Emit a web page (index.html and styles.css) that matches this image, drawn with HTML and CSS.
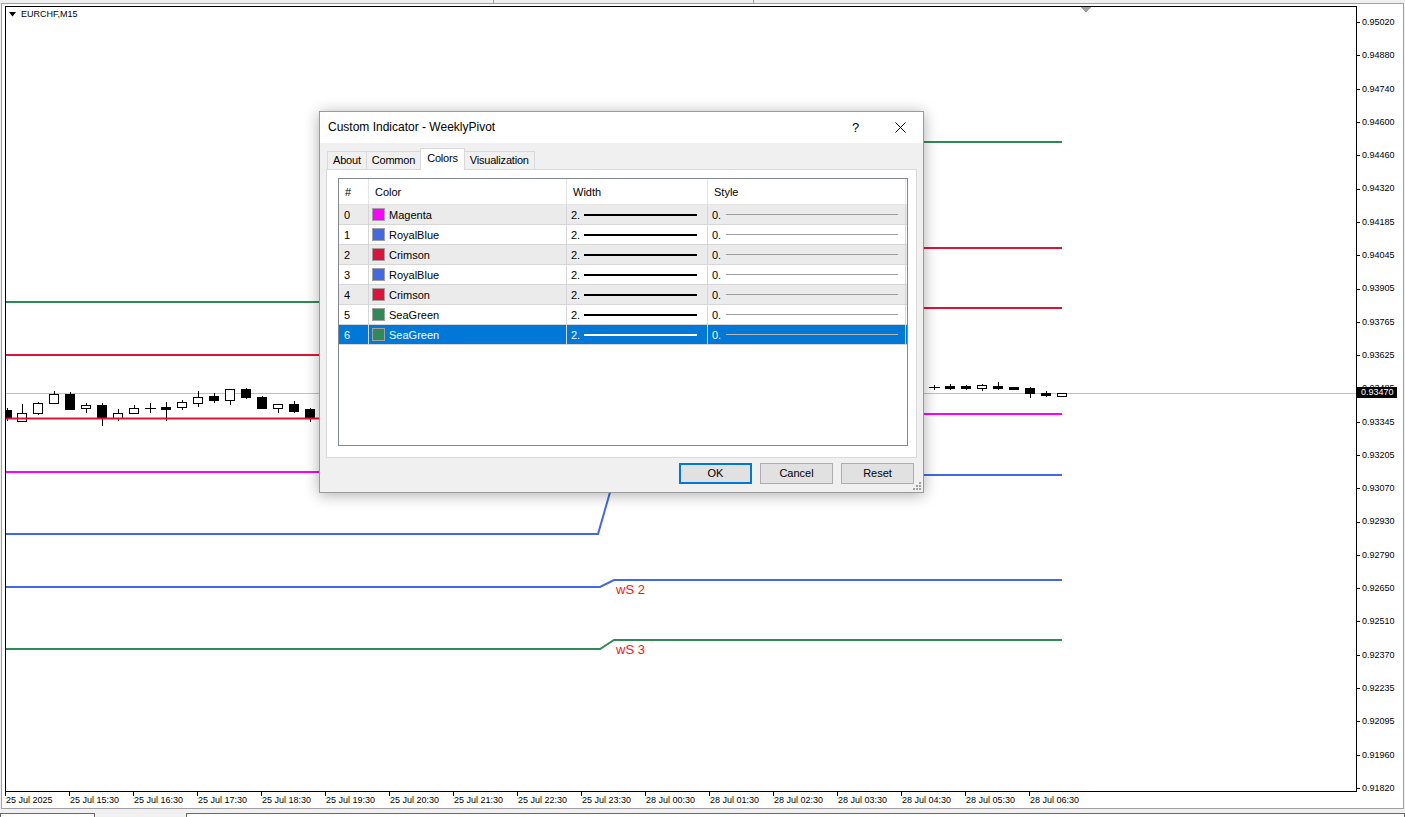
FILE: index.html
```html
<!DOCTYPE html>
<html lang="en">
<head>
    <meta charset="UTF-8">
    <title>EURCHF,M15 - Custom Indicator</title>
    <link rel="stylesheet" href="styles.css">
</head>
<body>
<div class="terminal">

    <div class="top-strip">
        <span class="top-cell first"></span>
        <span class="top-cell second"></span>
    </div>

    <div class="chart-window">
        <div class="chart-grid">

            <!-- plot area -->
            <div class="plot">
                <div class="symbol">
                    <svg width="7" height="5" viewBox="0 0 7 5"><path d="M0 0H7L3.5 4.5Z" fill="#000"/></svg>
                    <span>EURCHF,M15</span>
                </div>
                <svg width="1350" height="784" viewBox="6 7 1350 784" shape-rendering="crispEdges">
                    <!-- chart shift marker -->
                    <path d="M1080 7H1091L1085.5 12.5Z" fill="#a0a0a0"/>
                    <!-- bid line -->
                    <path d="M6 393.5H1356" stroke="#c0c0c0" stroke-width="1"/>

                    <!-- candles left -->
                    <g stroke="#000" stroke-width="1">
                        <path d="M7.5 408V421"/><rect x="2.5" y="410.5" width="9" height="8" fill="#000"/>
                        <path d="M22.5 404V421"/><rect x="17.5" y="413.5" width="9" height="8" fill="#fff"/>
                        <path d="M38.5 402V415"/><rect x="33.5" y="403.5" width="9" height="10" fill="#fff"/>
                        <path d="M54.5 391V403"/><rect x="49.5" y="394.5" width="9" height="9" fill="#fff"/>
                        <path d="M70.5 392V409"/><rect x="65.5" y="394.5" width="9" height="15" fill="#000"/>
                        <path d="M86.5 403V413"/><rect x="81.5" y="405.5" width="9" height="3" fill="#fff"/>
                        <path d="M102.5 403V426"/><rect x="97.5" y="405.5" width="9" height="13" fill="#000"/>
                        <path d="M118.5 409V421"/><rect x="113.5" y="413.5" width="9" height="5" fill="#fff"/>
                        <path d="M134.5 405V413"/><rect x="129.5" y="408.5" width="9" height="5" fill="#fff"/>
                        <path d="M150.5 403V413M145 408.5H156"/>
                        <path d="M166.5 402V421"/><rect x="161.5" y="407.5" width="9" height="2" fill="#000"/>
                        <path d="M182.5 400V410"/><rect x="177.5" y="402.5" width="9" height="5" fill="#fff"/>
                        <path d="M198.5 391V407"/><rect x="193.5" y="397.5" width="9" height="6" fill="#fff"/>
                        <path d="M214.5 393V403"/><rect x="209.5" y="396.5" width="9" height="4" fill="#000"/>
                        <path d="M230.5 389V405"/><rect x="225.5" y="389.5" width="9" height="11" fill="#fff"/>
                        <path d="M246.5 388V399"/><rect x="241.5" y="389.5" width="9" height="8" fill="#000"/>
                        <path d="M262.5 396V408"/><rect x="257.5" y="397.5" width="9" height="11" fill="#000"/>
                        <path d="M278.5 404V413"/><rect x="273.5" y="404.5" width="9" height="4" fill="#fff"/>
                        <path d="M294.5 401V413"/><rect x="289.5" y="404.5" width="9" height="7" fill="#000"/>
                        <path d="M310.5 408V422"/><rect x="305.5" y="409.5" width="9" height="9" fill="#000"/>
                    </g>

                    <!-- candles right -->
                    <g stroke="#000" stroke-width="1">
                        <path d="M934.5 385V390M929 387.5H940"/>
                        <path d="M950.5 384V390"/><rect x="945.5" y="386.5" width="9" height="2" fill="#000"/>
                        <path d="M966.5 385V390"/><rect x="961.5" y="386.5" width="9" height="2" fill="#000"/>
                        <path d="M982.5 384V391"/><rect x="977.5" y="385.5" width="9" height="3" fill="#fff"/>
                        <path d="M998.5 382V390"/><rect x="993.5" y="386.5" width="9" height="2" fill="#000"/>
                        <rect x="1009.5" y="387.5" width="9" height="2" fill="#000"/>
                        <path d="M1030.5 387V398"/><rect x="1025.5" y="388.5" width="9" height="5" fill="#000"/>
                        <path d="M1046.5 391V397"/><rect x="1041.5" y="393.5" width="9" height="2" fill="#000"/>
                        <rect x="1057.5" y="393.5" width="9" height="3" fill="#fff"/>
                    </g>

                    <!-- weekly pivot levels -->
                    <g fill="none" stroke-width="2" shape-rendering="auto">
                        <polyline points="6,302 600,302 614,142 1062,142" stroke="#2e8b57"/>
                        <polyline points="6,355 600,355 614,248 1062,248" stroke="#dc143c"/>
                        <polyline points="6,418.5 600,418.5 614,308 1062,308" stroke="#dc143c"/>
                        <polyline points="6,472 600,472 614,414 1062,414" stroke="#ff00ff"/>
                        <polyline points="6,534 598,534 615,475 1062,475" stroke="#4169e1"/>
                        <polyline points="6,587 600,587 614,580 1062,580" stroke="#4169e1"/>
                        <polyline points="6,649 600,649 614,640 1062,640" stroke="#2e8b57"/>
                    </g>
                    <text x="616" y="594" class="level-label">wS 2</text>
                    <text x="616" y="654" class="level-label">wS 3</text>
                </svg>
            </div>

            <!-- price scale -->
            <div class="price-axis">
                <span class="tick-label">0.95020</span>
                <span class="tick-label">0.94880</span>
                <span class="tick-label">0.94740</span>
                <span class="tick-label">0.94600</span>
                <span class="tick-label">0.94460</span>
                <span class="tick-label">0.94320</span>
                <span class="tick-label">0.94185</span>
                <span class="tick-label">0.94045</span>
                <span class="tick-label">0.93905</span>
                <span class="tick-label">0.93765</span>
                <span class="tick-label">0.93625</span>
                <span class="tick-label">0.93485</span>
                <span class="tick-label">0.93345</span>
                <span class="tick-label">0.93205</span>
                <span class="tick-label">0.93070</span>
                <span class="tick-label">0.92930</span>
                <span class="tick-label">0.92790</span>
                <span class="tick-label">0.92650</span>
                <span class="tick-label">0.92510</span>
                <span class="tick-label">0.92370</span>
                <span class="tick-label">0.92235</span>
                <span class="tick-label">0.92095</span>
                <span class="tick-label">0.91960</span>
                <span class="tick-label">0.91820</span>
                <span class="bid">0.93470</span>
            </div>

            <!-- time scale -->
            <div class="time-axis">
                <span>25 Jul 2025</span>
                <span>25 Jul 15:30</span>
                <span>25 Jul 16:30</span>
                <span>25 Jul 17:30</span>
                <span>25 Jul 18:30</span>
                <span>25 Jul 19:30</span>
                <span>25 Jul 20:30</span>
                <span>25 Jul 21:30</span>
                <span>25 Jul 22:30</span>
                <span>25 Jul 23:30</span>
                <span>28 Jul 00:30</span>
                <span>28 Jul 01:30</span>
                <span>28 Jul 02:30</span>
                <span>28 Jul 03:30</span>
                <span>28 Jul 04:30</span>
                <span>28 Jul 05:30</span>
                <span>28 Jul 06:30</span>
            </div>
        </div>
    </div>

    <div class="tab-strip">
        <span class="strip-tab first"></span>
        <span class="strip-tab rest"></span>
    </div>

    <!-- indicator properties dialog -->
    <div class="dialog">
        <div class="dlg-title">
            <span class="caption">Custom Indicator - WeeklyPivot</span>
            <span class="dlg-btn help">?</span>
            <span class="dlg-btn close">
                <svg width="11" height="11" viewBox="0 0 11 11"><path d="M0.5 0.5L10.5 10.5M10.5 0.5L0.5 10.5" stroke="#000" stroke-width="1"/></svg>
            </span>
        </div>

        <div class="dlg-body">
            <div class="tabs">
                <span class="tab">About</span>
                <span class="tab">Common</span>
                <span class="tab active">Colors</span>
                <span class="tab">Visualization</span>
            </div>

            <div class="panel">
                <div class="listview">
                    <div class="lv-row lv-head"><span>#</span><span>Color</span><span>Width</span><span>Style</span></div>
                    <div class="lv-row alt"><span>0</span><span><i class="swatch magenta"></i>Magenta</span><span>2.<i class="wline"></i></span><span>0.<i class="sline"></i></span></div>
                    <div class="lv-row"><span>1</span><span><i class="swatch royalblue"></i>RoyalBlue</span><span>2.<i class="wline"></i></span><span>0.<i class="sline"></i></span></div>
                    <div class="lv-row alt"><span>2</span><span><i class="swatch crimson"></i>Crimson</span><span>2.<i class="wline"></i></span><span>0.<i class="sline"></i></span></div>
                    <div class="lv-row"><span>3</span><span><i class="swatch royalblue"></i>RoyalBlue</span><span>2.<i class="wline"></i></span><span>0.<i class="sline"></i></span></div>
                    <div class="lv-row alt"><span>4</span><span><i class="swatch crimson"></i>Crimson</span><span>2.<i class="wline"></i></span><span>0.<i class="sline"></i></span></div>
                    <div class="lv-row"><span>5</span><span><i class="swatch seagreen"></i>SeaGreen</span><span>2.<i class="wline"></i></span><span>0.<i class="sline"></i></span></div>
                    <div class="lv-row selected"><span>6</span><span><i class="swatch seagreen"></i>SeaGreen</span><span>2.<i class="wline"></i></span><span>0.<i class="sline"></i></span></div>
                </div>
            </div>

            <div class="dlg-buttons">
                <button class="default">OK</button>
                <button>Cancel</button>
                <button>Reset</button>
            </div>
        </div>

        <svg class="grip" width="8" height="8" viewBox="0 0 8 8" fill="#a0a0a0">
            <rect x="6" y="0" width="2" height="2"/>
            <rect x="3" y="3" width="2" height="2"/><rect x="6" y="3" width="2" height="2"/>
            <rect x="0" y="6" width="2" height="2"/><rect x="3" y="6" width="2" height="2"/><rect x="6" y="6" width="2" height="2"/>
        </svg>
    </div>

</div>
</body>
</html>
```

FILE: styles.css
```css
* {
    box-sizing: border-box;
}

body {
    margin: 0;
    background-color: #f0f0f0;
    font-family: "Liberation Sans", Arial, sans-serif;
    color: #000;
    overflow: hidden;
}

.terminal {
    width: 1405px;
    height: 817px;
    display: flex;
    flex-direction: column;
    position: relative;
}

/* strip of the toolbar above the chart */
.top-strip {
    height: 3px;
    display: flex;
}

.top-cell {
    border-right: 1px solid #a0a0a0;
}

.top-cell.first {
    width: 494px;
}

.top-cell.second {
    width: 260px;
}

/* chart window */
.chart-window {
    height: 806px;
    margin: 0 1px;
    border: 1px solid #a0a0a0;
    background-color: #fff;
    padding: 2px 0 0 3px;
}

.chart-grid {
    display: grid;
    grid-template-columns: 1352px 1fr;
    grid-template-rows: 786px 16px;
    height: 100%;
}

.plot {
    border: 1px solid #000;
    position: relative;
}

.plot > svg {
    display: block;
}

.symbol {
    position: absolute;
    left: 3px;
    top: 2px;
    display: flex;
    align-items: center;
    gap: 5px;
    font-size: 9px;
    line-height: 11px;
}

.level-label {
    font-family: "Liberation Sans", Arial, sans-serif;
    font-size: 13px;
    fill: #ff1010;
}

/* price scale */
.price-axis {
    position: relative;
    display: flex;
    flex-direction: column;
    font-size: 9px;
}

.tick-label {
    flex: none;
    height: 33.3px;
    line-height: 33.3px;
    padding-left: 5px;
    background: linear-gradient(#000, #000) no-repeat 0 50% / 3px 1px;
}

.bid {
    position: absolute;
    left: 0;
    top: 381px;
    width: 40px;
    height: 11px;
    line-height: 11px;
    padding-left: 4px;
    background-color: #000;
    color: #fff;
}

/* time scale */
.time-axis {
    grid-column: 1 / 3;
    display: flex;
    font-size: 9px;
    line-height: 16px;
}

.time-axis span {
    flex: none;
    width: 64px;
    padding-left: 1px;
    white-space: nowrap;
    background: linear-gradient(#000, #000) no-repeat 0 0 / 1px 4px;
}

/* sheet tabs at the bottom */
.tab-strip {
    flex: 1;
    display: flex;
    align-items: flex-end;
}

.strip-tab {
    height: 4px;
    border: 1px solid #696969;
    border-bottom: none;
    background-color: #fff;
}

.strip-tab.first {
    width: 95px;
}

.strip-tab.rest {
    flex: 1;
    margin-left: 91px;
}

/* dialog */
.dialog {
    position: absolute;
    left: 319px;
    top: 111px;
    width: 605px;
    height: 382px;
    border: 1px solid #9a9a9a;
    background-color: #f0f0f0;
    box-shadow: 0 2px 14px rgba(0, 0, 0, 0.32);
    font-size: 11px;
}

.dlg-title {
    height: 31px;
    background-color: #fff;
    display: flex;
    align-items: center;
    padding-left: 8px;
}

.caption {
    flex: 1;
    font-size: 12px;
    margin-top: -1px;
}

.dlg-btn {
    width: 45px;
    height: 31px;
    display: flex;
    align-items: center;
    justify-content: center;
}

.dlg-btn.help {
    font-size: 13px;
}

.dlg-body {
    padding: 8px 6px 0 6px;
}

.tabs {
    display: flex;
    align-items: flex-end;
    height: 18px;
    padding-left: 1px;
    position: relative;
    z-index: 1;
}

.tab {
    height: 18px;
    line-height: 17px;
    padding: 0 5px;
    border: 1px solid #d9d9d9;
    border-bottom: none;
    margin-left: -1px;
    letter-spacing: -0.2px;
}

.tab:first-child {
    margin-left: 0;
}

.tab.active {
    height: 22px;
    line-height: 18px;
    margin-bottom: -1px;
    padding: 0 6px;
    background-color: #fff;
}

.panel {
    height: 289px;
    border: 1px solid #d9d9d9;
    background-color: #fff;
    padding: 8px 0 0 11px;
}

.listview {
    width: 570px;
    height: 268px;
    border: 1px solid #828790;
    background-color: #fff;
}

.lv-row {
    display: grid;
    grid-template-columns: 30px 198px 141px 198px;
    height: 20px;
    border-bottom: 1px solid #d6d6d6;
}

.lv-row span {
    display: flex;
    align-items: center;
    padding-left: 4px;
    border-right: 1px solid #d6d6d6;
    white-space: nowrap;
    overflow: hidden;
}

.lv-row span:first-child {
    padding-left: 5px;
}

.lv-row span:nth-child(2) {
    padding-left: 3px;
}

.lv-row.lv-head {
    height: 26px;
    border-bottom-color: #e5e5e5;
}

.lv-row.lv-head span {
    padding-left: 6px;
    border-right-color: #e5e5e5;
}

.lv-row.alt {
    background-color: #ebebeb;
}

.lv-row.selected {
    background-color: #0078d7;
    color: #fff;
}

.swatch {
    width: 13px;
    height: 13px;
    border: 1px solid #a0a0a0;
    margin-right: 4px;
}

.swatch.magenta { background-color: #ff00ff; }
.swatch.royalblue { background-color: #4169e1; }
.swatch.crimson { background-color: #dc143c; }
.swatch.seagreen { background-color: #2e8b57; }

.wline {
    width: 113px;
    height: 2px;
    margin-left: 4px;
    background-color: #000;
}

.sline {
    width: 172px;
    height: 1px;
    margin-left: 5px;
    background-color: #a0a0a0;
}

.selected .wline {
    background-color: #fff;
}

.selected .sline {
    background-color: #b8b8b8;
}

.dlg-buttons {
    display: flex;
    justify-content: flex-end;
    gap: 8px;
    margin-top: 5px;
    padding-right: 3px;
}

.dlg-buttons button {
    width: 73px;
    height: 21px;
    padding: 0 0 1px;
    font-family: "Liberation Sans", Arial, sans-serif;
    font-size: 11px;
    color: #000;
    background-color: #e1e1e1;
    border: 1px solid #adadad;
}

.dlg-buttons button.default {
    border: 2px solid #0078d7;
}

.grip {
    position: absolute;
    right: 2px;
    bottom: 2px;
}
```
